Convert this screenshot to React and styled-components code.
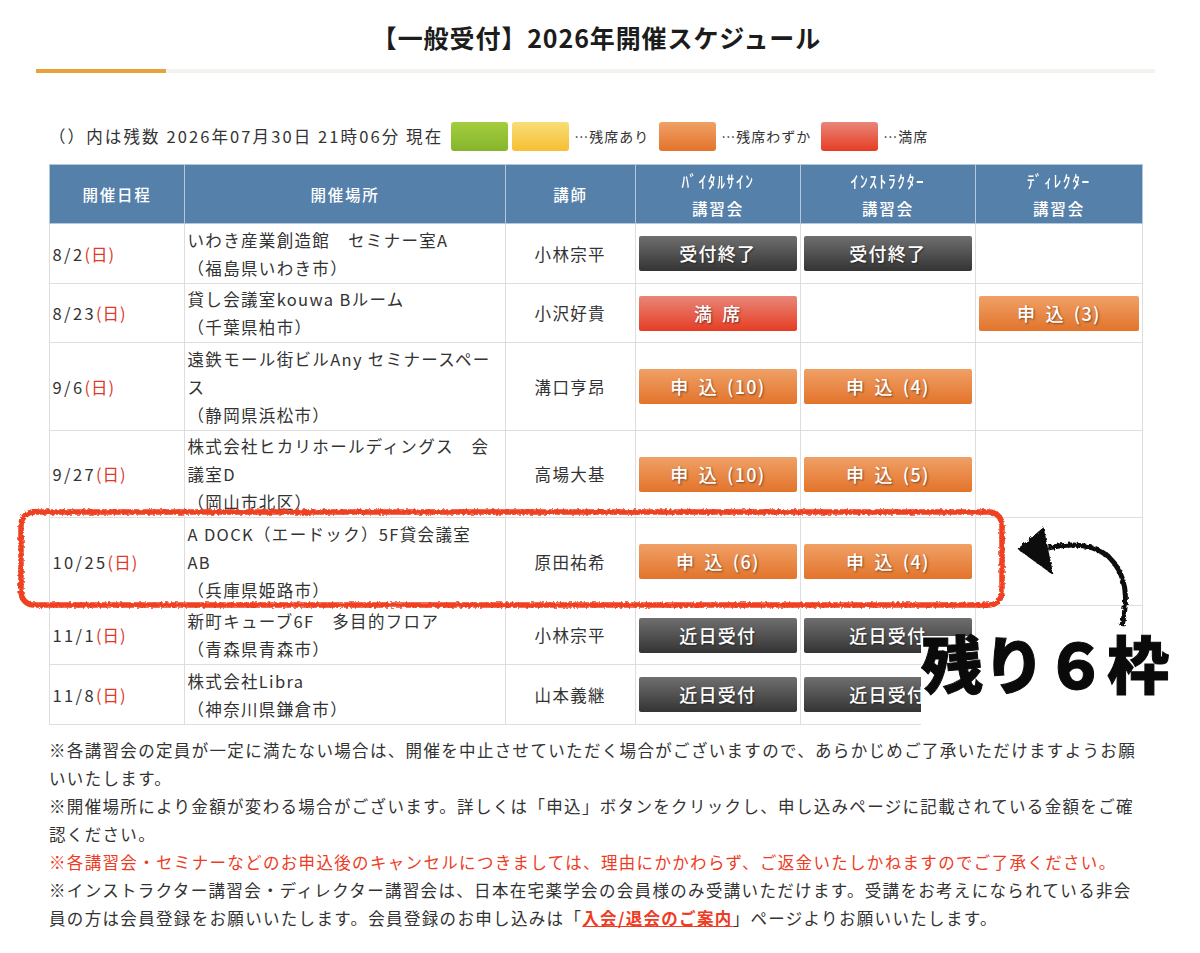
import React from 'react'
import styled, { createGlobalStyle } from 'styled-components'

const GlobalStyle = createGlobalStyle`
  body {
    margin: 0;
    background: #fff;
    color: #333;
    font-family: "Noto Sans CJK JP", "Noto Sans", sans-serif;
    font-size: 16.5px;
    line-height: 28px;
    letter-spacing: 1.33px;
  }
`

const gradients = {
  gray: 'linear-gradient(#6f6f6f, #343434)',
  red: 'linear-gradient(#e98679, #e53d23)',
  orange: 'linear-gradient(#f0a066, #e2742b)',
  green: 'linear-gradient(#a5cd3f, #85b52c)',
  yellow: 'linear-gradient(#f8dd76, #f6bf33)',
}

const Page = styled.div`
  position: relative;
  width: 1200px;
  height: 953px;
  overflow: hidden;
`

const Title = styled.h2`
  margin: 0;
  padding: 20px 7px 0 0;
  height: 47px;
  box-sizing: border-box;
  text-align: center;
  font-size: 25px;
  line-height: 34px;
  font-weight: 700;
  letter-spacing: 0.9px;
  color: #1c1c1c;
`

const Rule = styled.div`
  margin: 22px 45px 0 36px;
  height: 4px;
  background: #f3f2ee;
  &::before {
    content: '';
    display: block;
    width: 130px;
    height: 4px;
    background: #e8a23c;
  }
`

const Legend = styled.div`
  display: flex;
  align-items: center;
  height: 30px;
  margin: 48px 0 13px 49px;
  letter-spacing: 2.1px;
`

const Swatch = styled.span`
  width: 57px;
  height: 29px;
  border-radius: 3px;
  margin-left: ${p => p.$gap}px;
  background: ${p => gradients[p.$tone]};
`

const LegendNote = styled.span`
  margin-left: 5px;
  font-size: 14px;
  letter-spacing: 1px;
`

const Table = styled.table`
  width: 1093px;
  margin-left: 49px;
  border-collapse: collapse;
  table-layout: fixed;
`

const Th = styled.th`
  width: ${p => p.$w}px;
  padding: 0 3px;
  height: 59px;
  box-sizing: border-box;
  background: #5580aa;
  color: #fff;
  border: 1px solid #b4c8dc;
  font-weight: 500;
  font-size: 15.5px;
  letter-spacing: 1.8px;
  text-align: center;
`

const Kana = styled.span`
  display: block;
  font-size: 15.5px;
  letter-spacing: 1.6px;
  transform: scaleY(1.1);
`

const Row = styled.tr`
  height: ${p => p.$h}px;
`

const Td = styled.td`
  padding: 0 3px 0 2.5px;
  border: 1px solid #dedede;
  vertical-align: middle;
  text-align: ${p => (p.$center ? 'center' : 'left')};
`

const DateText = styled.span`
  letter-spacing: 2.4px;
`

const Sun = styled.span`
  color: #e0382a;
  letter-spacing: 1px;
`

const Btn = styled.div`
  height: 35px;
  border-radius: 2px;
  background: ${p => gradients[p.$tone]};
  color: #fff;
  font-size: 18px;
  font-weight: 500;
  line-height: 35px;
  text-align: center;
  letter-spacing: 1.2px;
  word-spacing: 4px;
  text-shadow: 1px 1px 2px rgba(0, 0, 0, 0.45);
`

const Notes = styled.div`
  margin: 11px 62px 0 49px;
`

const Note = styled.p`
  margin: 0;
  color: ${p => (p.$alert ? '#ee3b24' : '#333')};
`

const NoteLink = styled.a`
  color: #ee3b24;
  font-weight: 700;
  text-decoration: underline;
`

const Marks = styled.svg`
  position: absolute;
  left: 0;
  top: 0;
  pointer-events: none;
`

const Patch = styled.div`
  position: absolute;
  left: 921px;
  top: 636px;
  width: 279px;
  height: 94px;
  background: #fff;
  color: #0a0a0a;
  font-size: 62px;
  line-height: 52px;
  font-weight: 900;
  letter-spacing: 0;
  -webkit-text-stroke: 1px #0a0a0a;
  white-space: nowrap;
`

const rows = [
  { h: 60, date: '8/2', place: ['いわき産業創造館　セミナー室A', '（福島県いわき市）'], who: '小林宗平', cells: [['gray', '受付終了'], ['gray', '受付終了'], null] },
  { h: 59, date: '8/23', place: ['貸し会議室kouwa Bルーム', '（千葉県柏市）'], who: '小沢好貴', cells: [['red', '満 席'], null, ['orange', '申 込 (3)']] },
  { h: 88, date: '9/6', place: ['遠鉄モール街ビルAny セミナースペー', 'ス', '（静岡県浜松市）'], who: '溝口亨昂', cells: [['orange', '申 込 (10)'], ['orange', '申 込 (4)'], null] },
  { h: 87, date: '9/27', place: ['株式会社ヒカリホールディングス　会', '議室D', '（岡山市北区）'], who: '高場大基', cells: [['orange', '申 込 (10)'], ['orange', '申 込 (5)'], null] },
  { h: 88, date: '10/25', place: ['A DOCK（エードック）5F貸会議室', 'AB', '（兵庫県姫路市）'], who: '原田祐希', cells: [['orange', '申 込 (6)'], ['orange', '申 込 (4)'], null] },
  { h: 59, date: '11/1', place: ['新町キューブ6F　多目的フロア', '（青森県青森市）'], who: '小林宗平', cells: [['gray', '近日受付'], ['gray', '近日受付'], null] },
  { h: 60, date: '11/8', place: ['株式会社Libra', '（神奈川県鎌倉市）'], who: '山本義継', cells: [['gray', '近日受付'], ['gray', '近日受付'], null] },
]

const App = () => (
  <Page>
    <GlobalStyle />
    <Title>【一般受付】2026年開催スケジュール</Title>
    <Rule />
    <Legend>
      <span>（）内は残数 2026年07月30日 21時06分 現在</span>
      <Swatch $tone="green" $gap={8} />
      <Swatch $tone="yellow" $gap={4} />
      <LegendNote>…残席あり</LegendNote>
      <Swatch $tone="orange" $gap={10} />
      <LegendNote>…残席わずか</LegendNote>
      <Swatch $tone="red" $gap={10} />
      <LegendNote>…満席</LegendNote>
    </Legend>
    <Table>
      <thead>
        <tr>
          <Th $w={135}>開催日程</Th>
          <Th $w={321}>開催場所</Th>
          <Th $w={130}>講師</Th>
          <Th $w={165}><Kana>ﾊﾞｲﾀﾙｻｲﾝ</Kana>講習会</Th>
          <Th $w={175}><Kana>ｲﾝｽﾄﾗｸﾀｰ</Kana>講習会</Th>
          <Th $w={167}><Kana>ﾃﾞｨﾚｸﾀｰ</Kana>講習会</Th>
        </tr>
      </thead>
      <tbody>
        {rows.map(row => (
          <Row key={row.date} $h={row.h}>
            <Td><DateText>{row.date}</DateText><Sun>(日)</Sun></Td>
            <Td>
              {row.place.map((line, i) => (
                <React.Fragment key={i}>{i > 0 && <br />}{line}</React.Fragment>
              ))}
            </Td>
            <Td $center>{row.who}</Td>
            {row.cells.map((cell, i) => (
              <Td key={i}>{cell && <Btn $tone={cell[0]}>{cell[1]}</Btn>}</Td>
            ))}
          </Row>
        ))}
      </tbody>
    </Table>
    <Notes>
      <Note>※各講習会の定員が一定に満たない場合は、開催を中止させていただく場合がございますので、あらかじめご了承いただけますようお願いいたします。</Note>
      <Note>※開催場所により金額が変わる場合がございます。詳しくは「申込」ボタンをクリックし、申し込みページに記載されている金額をご確認ください。</Note>
      <Note $alert>※各講習会・セミナーなどのお申込後のキャンセルにつきましては、理由にかかわらず、ご返金いたしかねますのでご了承ください。</Note>
      <Note>※インストラクター講習会・ディレクター講習会は、日本在宅薬学会の会員様のみ受講いただけます。受講をお考えになられている非会員の方は会員登録をお願いいたします。会員登録のお申し込みは「<NoteLink href="#">入会/退会のご案内</NoteLink>」ページよりお願いいたします。</Note>
    </Notes>
    <Patch>残り６枠</Patch>
    <Marks width="1200" height="953" viewBox="0 0 1200 953" fill="none">
      <defs>
        <filter id="rough" x="-5%" y="-5%" width="110%" height="110%">
          <feTurbulence type="fractalNoise" baseFrequency="0.35" numOctaves="2" seed="4" />
          <feDisplacementMap in="SourceGraphic" scale="4" />
        </filter>
      </defs>
      <rect x="21" y="512" width="981" height="93" rx="13" stroke="#ef4023" strokeWidth="5.5" filter="url(#rough)" />
      <g filter="url(#rough)">
        <path d="M1122 626C1128 600 1128 575 1108 556C1092 543 1070 543 1048 548" stroke="#0a0a0a" strokeWidth="5" />
        <path d="M1019 549L1043 529L1052 573Z" fill="#0a0a0a" stroke="#0a0a0a" strokeWidth="2" />
      </g>
    </Marks>
  </Page>
)

export default App
